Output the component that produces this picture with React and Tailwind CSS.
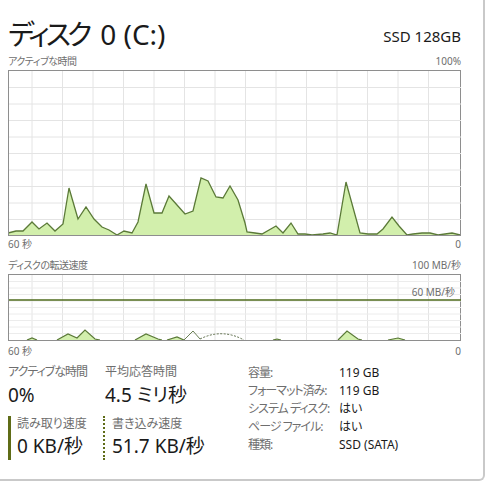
import React from "react";

const font =
  "font-['Noto_Sans','Noto_Sans_CJK_JP',sans-serif] [font-feature-settings:'palt']";

const vLines = Array.from({ length: 14 }, (_, i) => 23 + i * 30.5);

const activePts = [
  [8, 233], [16, 231], [23, 231], [32, 222], [39, 229], [47, 223], [55, 231],
  [63, 224], [69, 188], [78, 219], [86, 207], [94, 219], [102, 227], [109, 230],
  [117, 235], [124, 231], [132, 233], [138, 222], [146, 184], [154, 213],
  [162, 213], [169, 196], [177, 205], [185, 214], [193, 211], [201, 178],
  [208, 181], [216, 197], [223, 198], [230, 186], [238, 200], [245, 223],
  [247, 232], [255, 233], [262, 234], [276, 226], [283, 233], [291, 223],
  [298, 234], [305, 234], [312, 235], [323, 234], [330, 233], [337, 235],
  [346, 182], [360, 233], [368, 234], [377, 234], [383, 229], [392, 217],
  [399, 226], [407, 235], [413, 234], [422, 233], [430, 233], [438, 235],
  [445, 234], [452, 233], [460, 235],
].map(([x, y]) => [x - 9, y - 71]);

const toStr = (pts) => pts.map((p) => p.join(",")).join(" ");

function ActiveGraph() {
  const line = toStr(activePts);
  const area = `0,164 ${line} 452,164`;
  return (
    <div className="h-[166px] border border-[#8e8e8e] bg-white">
      <svg width="452" height="164" viewBox="0 0 452 164" className="block">
        {vLines.map((x) => (
          <line key={x} x1={x} y1="0" x2={x} y2="164" stroke="#e4e4e4" strokeWidth="1" />
        ))}
        {Array.from({ length: 9 }, (_, i) => 16.5 * (i + 1)).map((y) => (
          <line key={y} x1="0" y1={y} x2="452" y2={y} stroke="#e4e4e4" strokeWidth="1" />
        ))}
        <polygon points={area} fill="#d2efac" />
        <polyline points={line} fill="none" stroke="#5b7a38" strokeWidth="1.3" />
      </svg>
    </div>
  );
}

const bumps = [
  [[18, 65], [23, 63], [28, 65]],
  [[48, 65], [59, 59], [68, 63], [76, 55], [86, 64], [91, 65]],
  [[126, 65], [137, 59], [149, 64], [153, 65]],
  [[158, 65], [168, 62], [175, 65]],
  [[264, 65], [268, 64], [272, 65]],
  [[329, 65], [338, 56], [349, 64], [353, 65]],
  [[379, 65], [389, 63], [396, 65]],
];

function TransferGraph() {
  return (
    <div className="relative h-[67px] border border-[#8e8e8e] bg-white">
      <svg width="452" height="65" viewBox="0 0 452 65" className="block">
        {vLines.map((x) => (
          <line key={x} x1={x} y1="0" x2={x} y2="65" stroke="#e4e4e4" strokeWidth="1" />
        ))}
        {Array.from({ length: 9 }, (_, i) => 6.5 * (i + 1)).map((y) => (
          <line key={y} x1="0" y1={y} x2="452" y2={y} stroke="#ececec" strokeWidth="1" />
        ))}
        <line x1="0" y1="25" x2="452" y2="25" stroke="#4f6b1c" strokeWidth="1.5" />
        {bumps.map((b, i) => (
          <g key={i}>
            <polygon points={toStr(b)} fill="#d2efac" />
            <polyline points={toStr(b)} fill="none" stroke="#5b7a38" strokeWidth="1.2" />
          </g>
        ))}
        <polyline points="175,65 184,56 191,64" fill="none" stroke="#6b7f55" strokeWidth="1" />
        <path d="M191 64 Q213 53 235 65" fill="none" stroke="#5b6b48" strokeWidth="1" strokeDasharray="2 1.5" />
      </svg>
      <span className="absolute right-[5px] top-[10px] text-[10px] leading-[14px] text-[#6e6e6e]">
        60 MB/秒
      </span>
    </div>
  );
}

const specs = [
  ["容量:", "119 GB"],
  ["フォーマット済み:", "119 GB"],
  ["システム ディスク:", "はい"],
  ["ページ ファイル:", "はい"],
  ["種類:", "SSD (SATA)"],
];

export default function App() {
  return (
    <div
      className={`${font} w-[485px] h-[481px] bg-white border-r-2 border-b-2 border-[#c9c9c9] rounded-br-md overflow-hidden text-[#1a1a1a]`}
    >
      <div className="pl-[8px] pr-[22px]">
        <div className="flex items-end justify-between pt-[12px] h-[52px]">
          <span className="text-[28px] leading-[36px] whitespace-nowrap flex">
            <span className="tracking-[-4px]">ディスク</span>
            <span className="ml-[12px]">0 (C:)</span>
          </span>
          <span className="text-[15px] leading-[20px] mb-[6px]">SSD 128GB</span>
        </div>

        <div className="flex justify-between text-[10px] leading-[14px] text-[#6e6e6e] mt-[2px] mb-[2px]">
          <span className="tracking-[-0.5px]">アクティブな時間</span>
          <span>100%</span>
        </div>
        <ActiveGraph />
        <div className="flex justify-between text-[10px] leading-[14px] text-[#6e6e6e] mt-[1px]">
          <span>60 秒</span>
          <span>0</span>
        </div>

        <div className="flex justify-between text-[10px] leading-[14px] text-[#6e6e6e] mt-[7px] mb-[2px]">
          <span className="tracking-[-0.5px]">ディスクの転送速度</span>
          <span>100 MB/秒</span>
        </div>
        <TransferGraph />
        <div className="flex justify-between text-[10px] leading-[14px] text-[#6e6e6e] mt-[3px]">
          <span>60 秒</span>
          <span>0</span>
        </div>

        <div className="flex mt-[6px]">
          <div className="w-[240px]">
            <div className="flex">
              <div className="w-[97px]">
                <div className="text-[12px] leading-[16px] text-[#6e6e6e] tracking-[-1px] whitespace-nowrap">アクティブな時間</div>
                <div className="text-[19px] leading-[30px]">0%</div>
              </div>
              <div>
                <div className="text-[12px] leading-[16px] text-[#6e6e6e]">平均応答時間</div>
                <div className="text-[19px] leading-[30px]">4.5 ミリ秒</div>
              </div>
            </div>
            <div className="flex mt-[6px]">
              <div className="w-[95px] border-l-[3px] border-[#5f6c17] pl-[6px]">
                <div className="text-[12px] leading-[16px] text-[#6e6e6e]">読み取り速度</div>
                <div className="text-[19px] leading-[28px]">0 KB/秒</div>
              </div>
              <div className="border-l-2 border-dotted border-[#5f6c17] pl-[7px]">
                <div className="text-[12px] leading-[16px] text-[#6e6e6e]">書き込み速度</div>
                <div className="text-[19px] leading-[28px]">51.7 KB/秒</div>
              </div>
            </div>
          </div>
          <div className="flex flex-col">
            {specs.map(([k, v]) => (
              <div key={k} className="flex text-[12px] leading-[18px] whitespace-nowrap">
                <span className="w-[91px] text-[#6e6e6e] tracking-[-1px]">{k}</span>
                <span>{v}</span>
              </div>
            ))}
          </div>
        </div>
      </div>
    </div>
  );
}
